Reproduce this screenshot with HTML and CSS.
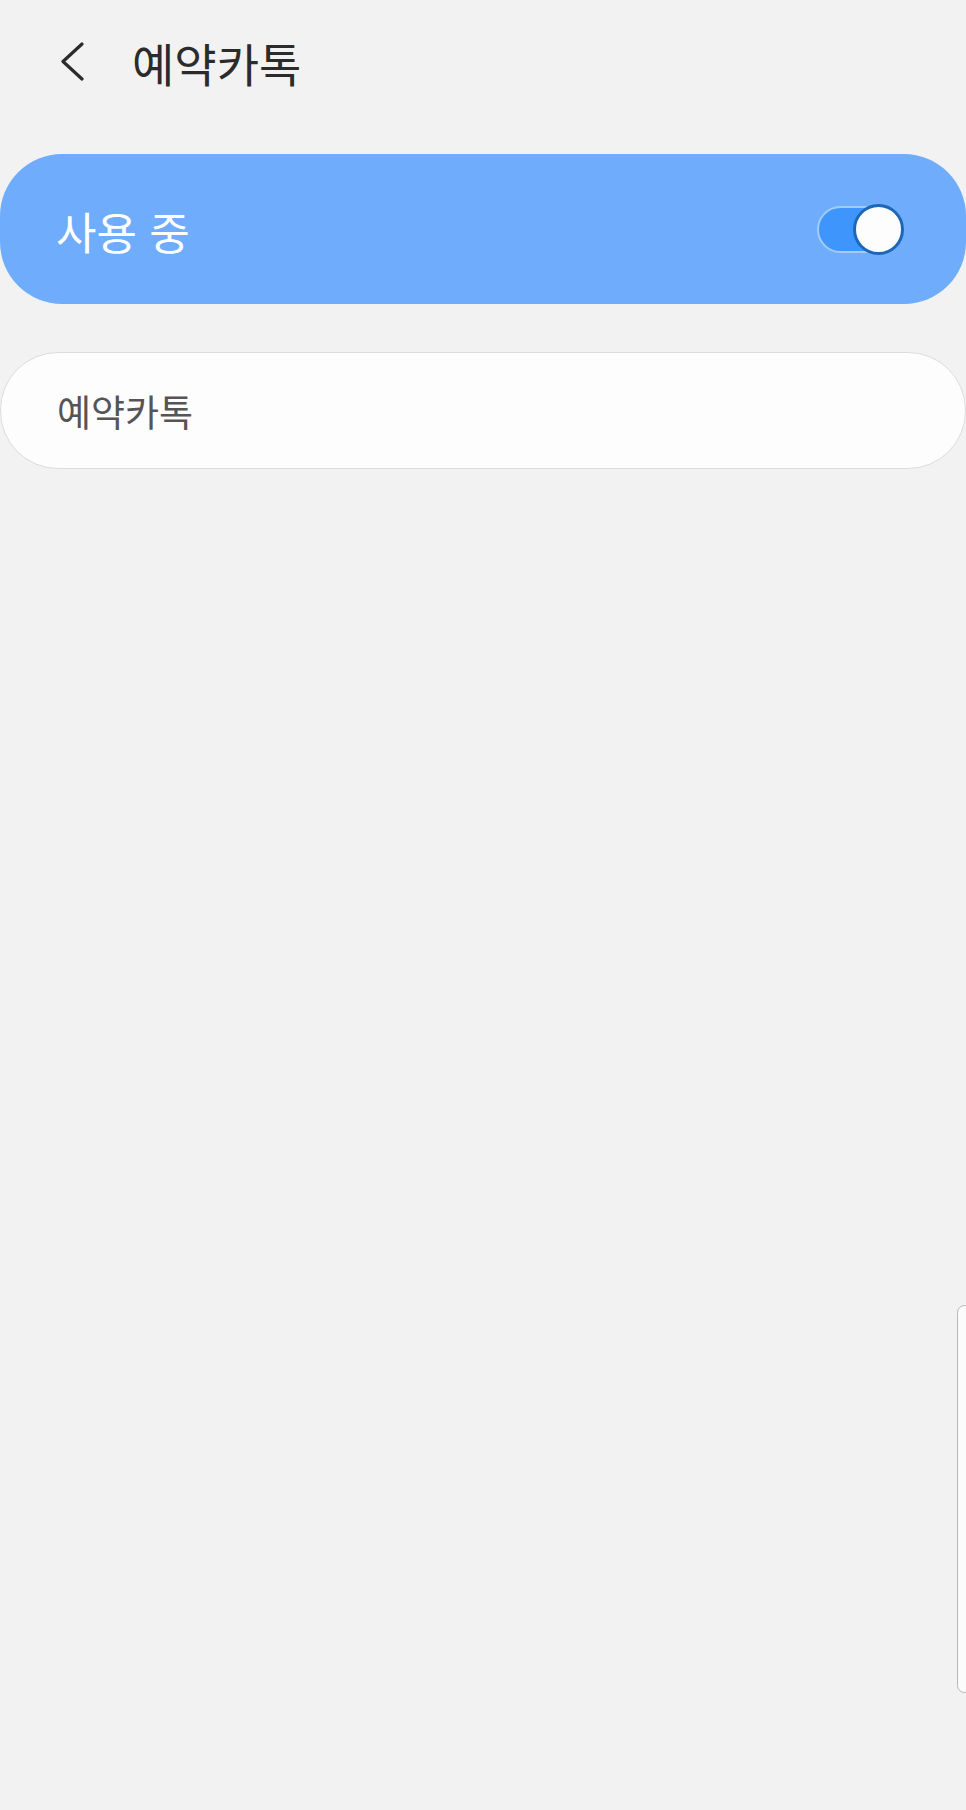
FILE: index.html
```html
<!DOCTYPE html>
<html lang="ko">
<head>
    <meta charset="UTF-8">
    <meta name="viewport" content="width=device-width, initial-scale=1.0">
    <title>예약카톡</title>
    <link rel="stylesheet" href="styles.css">
</head>
<body>
    <div class="screen">
        <header class="app-bar">
            <button class="back-button" aria-label="뒤로">
                <svg width="26" height="40" viewBox="0 0 26 40">
                    <polyline points="22,2 3,19.5 22,37" fill="none" stroke="#2b2b2b" stroke-width="3.2" stroke-linecap="round" stroke-linejoin="round"/>
                </svg>
            </button>
            <h1 class="title">예약카톡</h1>
        </header>

        <div class="master-switch">
            <span class="master-label">사용 중</span>
            <div class="toggle on">
                <div class="track"></div>
                <div class="thumb"></div>
            </div>
        </div>

        <div class="list-card">
            <div class="list-item">예약카톡</div>
        </div>
    </div>

    <!-- edge panel handle -->
    <div class="edge-handle"></div>
</body>
</html>
```

FILE: styles.css
```css
* {
    box-sizing: border-box;
}
body {
    margin: 0;
    padding: 0;
    background-color: #f2f2f2;
    font-family: "Noto Sans CJK KR", "Noto Sans", sans-serif;
    color: #2b2b2b;
}
.screen {
    width: 966px;
    min-height: 1810px;
}
.app-bar {
    height: 124px;
    display: flex;
    align-items: center;
    padding-left: 60px;
}
.back-button {
    background: none;
    border: none;
    padding: 0;
    width: 26px;
    height: 40px;
    margin-right: 46px;
    display: flex;
}
.title {
    margin: 0;
    font-size: 46px;
    font-weight: 400;
    color: #2b2b2b;
}
.master-switch {
    margin-top: 30px;
    height: 150px;
    background-color: #6fadfc;
    border-radius: 62px;
    display: flex;
    align-items: center;
    justify-content: space-between;
    padding: 0 62px 0 56px;
}
.master-label {
    color: #fff;
    font-size: 44px;
    margin-top: 4px;
}
.toggle {
    position: relative;
    width: 87px;
    height: 51px;
}
.track {
    position: absolute;
    left: 0;
    top: 2px;
    width: 74px;
    height: 47px;
    border: 2px solid #a3cbfb;
    border-radius: 24px;
    background-color: #3e95fb;
}
.thumb {
    position: absolute;
    right: 0;
    top: 0;
    width: 51px;
    height: 51px;
    border: 3px solid #1b68b8;
    border-radius: 50%;
    background-color: #fdfdfd;
}
.list-card {
    margin-top: 48px;
    height: 117px;
    background-color: #fdfdfd;
    border: 1px solid #dcdcdc;
    border-radius: 58px;
    display: flex;
    align-items: center;
}
.list-item {
    padding-left: 56px;
    font-size: 37px;
    color: #555;
}
.edge-handle {
    position: absolute;
    right: -6px;
    top: 1305px;
    width: 15px;
    height: 388px;
    border: 1.5px solid #b8b8b8;
    border-radius: 8px;
    background-color: #fbfbfb;
}
```
